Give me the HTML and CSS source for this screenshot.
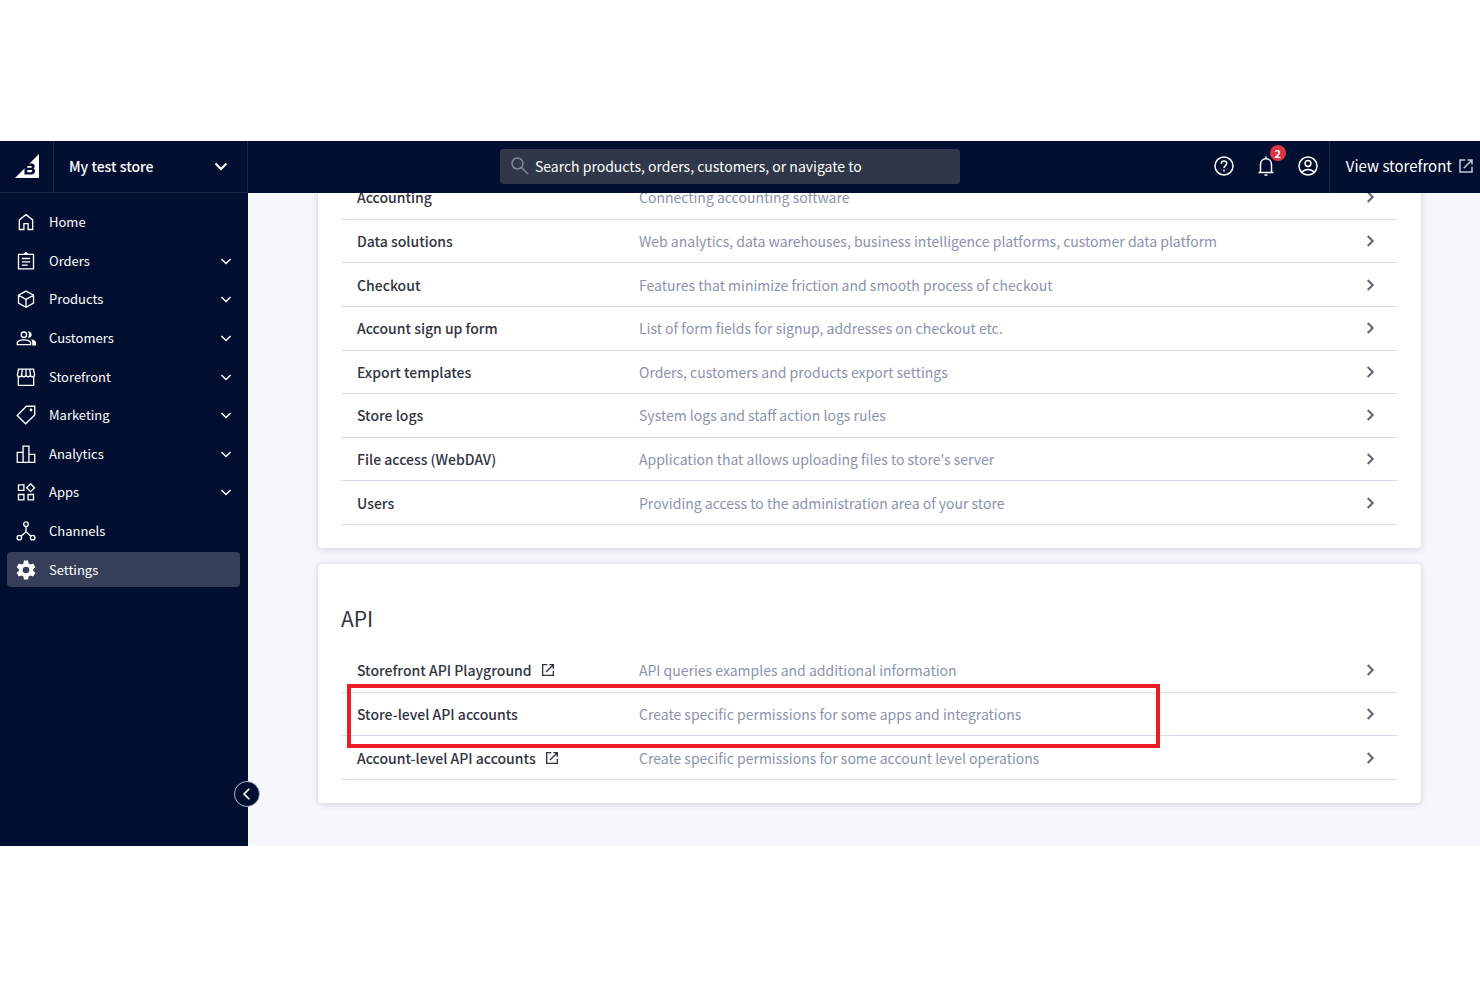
FILE: index.html
```html
<!DOCTYPE html>
<html lang="en">
<head>
  <meta charset="UTF-8" />
  <meta name="viewport" content="width=device-width, initial-scale=1.0"/>
  <title>Settings - My test store</title>
  <link rel="stylesheet" href="styles.css">
</head>
<body>

  <!-- Shared icons -->
  <svg class="sprite" aria-hidden="true">
    <symbol id="chevron-down" viewBox="0 0 24 24"><path d="M6.500 9.500l5.500 5.500 5.500-5.500"/></symbol>
    <symbol id="chevron-right" viewBox="0 0 24 24"><path d="M9.700 7l5 5-5 5"/></symbol>
    <symbol id="open-new" viewBox="0 0 24 24"><path d="M11 4H4v16h16v-7M14 4h6v6M20 4L9 15"/></symbol>
  </svg>

  <div class="app">
    <header class="topbar">
      <a class="logo" href="#" aria-label="BigCommerce home">
        <svg viewBox="0 0 24 24" width="24" height="24">
          <path fill="#fff" d="M24 0v24H0z"/>
          <path fill="#030f30" fill-rule="evenodd" d="M9.500 9.500h7c2 0 3.200 1.100 3.200 2.700 0 1.100-.5 1.900-1.300 2.300 1.100.4 1.700 1.300 1.700 2.600 0 2-1.400 3.400-3.600 3.400h-7zM12.300 11.900v1.900h3.500c.7 0 1.100-.4 1.100-1s-.4-.9-1.100-.9zM12.300 16v2.200h3.700c.8 0 1.200-.4 1.200-1.100S16.800 16 16 16z"/>
        </svg>
      </a>
      <button class="store-switch" type="button">
        My test store
        <svg class="icon" viewBox="0 0 24 24"><use href="#chevron-down"/></svg>
      </button>

      <div class="search-area">
        <label class="search">
          <svg viewBox="0 0 20 20" width="20" height="20"><circle cx="7.500" cy="7.500" r="5.500"/><path d="M11.500 11.500l6.500 6.500"/></svg>
          <input type="search" aria-label="Search" placeholder="Search products, orders, customers, or navigate to">
        </label>
      </div>

      <div class="actions">
        <button type="button" aria-label="Help">
          <svg viewBox="0 0 24 24"><circle cx="12" cy="12" r="9"/><path d="M9.300 9.800c0-1.700 1.200-2.700 2.700-2.700s2.700 1 2.700 2.500c0 2-2.700 2.200-2.700 4.400M12 15.600v1.900"/></svg>
        </button>
        <button type="button" aria-label="Notifications">
          <svg viewBox="0 0 24 24"><path d="M4.500 18.500h15M6.500 18.500v-8c0-3.300 2.200-5.700 5.500-5.700s5.500 2.400 5.500 5.700v8M12 4.800V2.500M10.500 21h3"/></svg>
          <span class="badge">2</span>
        </button>
        <button type="button" aria-label="Account">
          <svg viewBox="0 0 24 24"><circle cx="12" cy="12" r="9"/><circle cx="12" cy="9.500" r="2.900"/><path d="M5.700 18.300c1.600-1.900 3.800-2.900 6.300-2.900s4.700 1 6.300 2.900"/></svg>
        </button>
      </div>
      <a class="view-store" href="#">
        View storefront
        <svg viewBox="0 0 24 24" width="18" height="18"><use href="#open-new"/></svg>
      </a>
    </header>

    <div class="body">
      <nav class="sidebar">
        <ul class="menu">
          <li><a href="#">
            <svg viewBox="0 0 24 24"><path d="M4 21V9.500L12 3.200l8 6.300V21h-5.500v-7h-5v7z"/></svg>
            Home</a></li>
          <li><a href="#">
            <svg viewBox="0 0 24 24"><path d="M3 4h18v17.500H3zM7 9h10M7 13h10M7 17h7M9.500 4L12 2l2.500 2"/></svg>
            Orders
            <svg class="chevron" viewBox="0 0 24 24"><use href="#chevron-down"/></svg></a></li>
          <li><a href="#">
            <svg viewBox="0 0 24 24"><path d="M12 2.500l9 5v9.500l-9 5-9-5V7.500zM3 7.500l9 5 9-5M12 12.500V22"/></svg>
            Products
            <svg class="chevron" viewBox="0 0 24 24"><use href="#chevron-down"/></svg></a></li>
          <li><a href="#">
            <svg viewBox="0 0 24 24"><circle cx="9.500" cy="8" r="3.200"/><path d="M1.500 20v-2c0-2.300 3.500-3.800 8-3.800s8 1.500 8 3.800v2z"/><path class="solid" d="M14 4c3 0 4.800 1.700 4.800 4s-1.800 4-4.800 4c1-1 1.500-2.400 1.500-4S15 5 14 4zM18 13.500c3.500.6 6 2 6 4.500v3h-4.500v-3c0-1.700-.2-3-1.500-4.500z"/></svg>
            Customers
            <svg class="chevron" viewBox="0 0 24 24"><use href="#chevron-down"/></svg></a></li>
          <li><a href="#">
            <svg viewBox="0 0 24 24"><path d="M2.800 11.500V22h18.400V11.500M3 2.500h18l1.300 6.500c0 3.600-5.100 3.600-5.100 0 0 3.600-5.200 3.600-5.200 0 0 3.600-5.200 3.600-5.200 0 0 3.600-5.100 3.600-5.100 0zM7.500 2.500L6.800 9M12 2.500V9M16.500 2.500l.7 6.500"/></svg>
            Storefront
            <svg class="chevron" viewBox="0 0 24 24"><use href="#chevron-down"/></svg></a></li>
          <li><a href="#">
            <svg viewBox="0 0 24 24"><path d="M12.500 1.500H22.500V12L11.500 22.500 1.500 12.500z"/><circle class="solid" cx="18" cy="6" r="1.700"/></svg>
            Marketing
            <svg class="chevron" viewBox="0 0 24 24"><use href="#chevron-down"/></svg></a></li>
          <li><a href="#">
            <svg viewBox="0 0 24 24"><path d="M1.500 22V10H8.500v12zM8.500 22V2.500h7V22zM15.500 22v-9.500h7V22z"/></svg>
            Analytics
            <svg class="chevron" viewBox="0 0 24 24"><use href="#chevron-down"/></svg></a></li>
          <li><a href="#">
            <svg viewBox="0 0 24 24"><path d="M3 3.500h6.500V10H3zM3 15h6.500v6.500H3zM14.500 15H21v6.500h-6.500zM17.500 2.200l4.700 4.700-4.700 4.700-4.700-4.700z"/></svg>
            Apps
            <svg class="chevron" viewBox="0 0 24 24"><use href="#chevron-down"/></svg></a></li>
          <li><a href="#">
            <svg viewBox="0 0 24 24"><circle cx="12" cy="3.800" r="2.700"/><circle cx="4" cy="20" r="2.700"/><circle cx="20" cy="20" r="2.700"/><path d="M12 6.500v6.500l-6 5.200M12 13l6 5.200"/></svg>
            Channels</a></li>
          <li><a class="active" href="#">
            <svg viewBox="0 0 24 24"><path class="solid" fill-rule="evenodd" d="M9.500 .7h5l.6 3.400 2.100 1.200 3.400-1.200 2.600 4.700-2.700 2.200v2l2.700 2.200-2.600 4.700-3.400-1.200-2.100 1.200-.6 3.400h-5l-.6-3.400-2.100-1.200-3.400 1.200L.8 15.200 3.500 13v-2L.8 8.800l2.600-4.700 3.400 1.200 2.100-1.200zM12 8a4 4 0 100 8 4 4 0 000-8z"/></svg>
            Settings</a></li>
        </ul>
        <button class="collapse" type="button" aria-label="Collapse menu">
          <svg viewBox="0 0 24 24"><path d="M16 3l-9 9 9 9"/></svg>
        </button>
      </nav>

      <main class="content">
        <section class="card">
          <ul class="rows">
            <li><a href="#"><strong>Accounting</strong><span>Connecting accounting software</span><svg class="icon" viewBox="0 0 24 24"><use href="#chevron-right"/></svg></a></li>
            <li><a href="#"><strong>Data solutions</strong><span>Web analytics, data warehouses, business intelligence platforms, customer data platform</span><svg class="icon" viewBox="0 0 24 24"><use href="#chevron-right"/></svg></a></li>
            <li><a href="#"><strong>Checkout</strong><span>Features that minimize friction and smooth process of checkout</span><svg class="icon" viewBox="0 0 24 24"><use href="#chevron-right"/></svg></a></li>
            <li><a href="#"><strong>Account sign up form</strong><span>List of form fields for signup, addresses on checkout etc.</span><svg class="icon" viewBox="0 0 24 24"><use href="#chevron-right"/></svg></a></li>
            <li><a href="#"><strong>Export templates</strong><span>Orders, customers and products export settings</span><svg class="icon" viewBox="0 0 24 24"><use href="#chevron-right"/></svg></a></li>
            <li><a href="#"><strong>Store logs</strong><span>System logs and staff action logs rules</span><svg class="icon" viewBox="0 0 24 24"><use href="#chevron-right"/></svg></a></li>
            <li><a href="#"><strong>File access (WebDAV)</strong><span>Application that allows uploading files to store's server</span><svg class="icon" viewBox="0 0 24 24"><use href="#chevron-right"/></svg></a></li>
            <li><a href="#"><strong>Users</strong><span>Providing access to the administration area of your store</span><svg class="icon" viewBox="0 0 24 24"><use href="#chevron-right"/></svg></a></li>
          </ul>
        </section>

        <section class="card">
          <h2>API</h2>
          <ul class="rows rows-api">
            <li><a href="#"><strong>Storefront API Playground <svg class="open" viewBox="0 0 24 24"><use href="#open-new"/></svg></strong><span>API queries examples and additional information</span><svg class="icon" viewBox="0 0 24 24"><use href="#chevron-right"/></svg></a></li>
            <li class="marked"><a href="#"><strong>Store-level API accounts</strong><span>Create specific permissions for some apps and integrations</span><svg class="icon" viewBox="0 0 24 24"><use href="#chevron-right"/></svg></a></li>
            <li><a href="#"><strong>Account-level API accounts <svg class="open" viewBox="0 0 24 24"><use href="#open-new"/></svg></strong><span>Create specific permissions for some account level operations</span><svg class="icon" viewBox="0 0 24 24"><use href="#chevron-right"/></svg></a></li>
          </ul>
        </section>
      </main>
    </div>
  </div>

</body>
</html>
```
FILE: styles.css
```css
* {
  box-sizing: border-box;
}

body {
  margin: 0;
  min-height: 100vh;
  padding: 141px 0;
  display: flex;
  flex-direction: column;
  background: #fff;
  font-family: "Source Sans Pro", "Noto Sans CJK SC", sans-serif;
  font-size: 14px;
  line-height: 20px;
  color: #313440;
}

a {
  color: inherit;
  text-decoration: none;
}

button {
  padding: 0;
  border: none;
  background: none;
  font: inherit;
  color: inherit;
  cursor: pointer;
}

ul {
  margin: 0;
  padding: 0;
  list-style: none;
}

svg {
  flex: none;
  fill: none;
  stroke: currentColor;
  stroke-width: 2;
}

.sprite {
  position: absolute;
  width: 0;
  height: 0;
}

.icon {
  width: 24px;
  height: 24px;
}

.solid {
  fill: currentColor;
  stroke: none;
}

.app {
  flex: 1;
  display: flex;
  flex-direction: column;
}

/* Top bar */
.topbar {
  display: flex;
  height: 52px;
  background: #030f30;
  color: #fff;
}

.logo {
  width: 54px;
  padding: 0 0 1px 15px;
  display: flex;
  align-items: center;
  border-right: 1px solid #1d2744;
  border-bottom: 1px solid #1d2744;
}

.logo svg {
  stroke: none;
}

.store-switch {
  width: 194px;
  padding: 0 14px 2px 15px;
  display: flex;
  align-items: center;
  justify-content: space-between;
  font-weight: 500;
  border-right: 1px solid #1d2744;
  border-bottom: 1px solid #1d2744;
}

.search-area {
  flex: 1;
  padding-bottom: 2px;
  display: flex;
  align-items: center;
  justify-content: center;
}

.search {
  width: 460px;
  height: 35px;
  padding: 0 10px;
  display: flex;
  align-items: center;
  gap: 5px;
  border-radius: 4px;
  background: #2f3749;
}

.search svg {
  color: #8088a0;
  stroke-width: 1.5;
}

.search input {
  flex: 1;
  min-width: 0;
  padding: 0;
  border: none;
  outline: none;
  background: none;
  font: inherit;
  color: #fff;
}

.search input::placeholder {
  color: #fff;
  opacity: 1;
}

.actions {
  padding: 0 9px 2px 0;
  display: flex;
  align-items: center;
  gap: 18px;
  border-right: 1px solid #1d2744;
}

.actions button {
  position: relative;
  width: 24px;
  height: 24px;
}

.actions svg {
  display: block;
  stroke-width: 1.5;
}

.badge {
  position: absolute;
  top: -9px;
  right: -8px;
  width: 16px;
  height: 16px;
  border-radius: 50%;
  background: #db3643;
  font-size: 11px;
  font-weight: 700;
  line-height: 16px;
  text-align: center;
}

.view-store {
  padding: 0 5px 2px 16px;
  display: flex;
  align-items: center;
  gap: 5px;
  font-size: 15px;
}

.view-store svg {
  color: #c5c9d6;
}

/* Sidebar */
.body {
  flex: 1;
  display: flex;
  min-height: 0;
}

.sidebar {
  position: relative;
  width: 248px;
  padding: 10px 7px;
  background: #030f30;
  color: #fff;
  font-size: 13px;
}

.menu {
  height: 386px;
  display: grid;
  grid-auto-rows: 1fr;
  align-items: center;
}

.menu a {
  height: 35px;
  padding: 0 4px 0 9px;
  display: flex;
  align-items: center;
  gap: 13px;
  margin-right: 1px;
  border-radius: 4px;
}

.menu svg {
  width: 20px;
  height: 20px;
  stroke-width: 1.6;
}

.menu .chevron {
  margin-left: auto;
}

.menu .active {
  background: #353f5a;
}

.collapse {
  position: absolute;
  right: -12px;
  bottom: 39px;
  width: 26px;
  height: 26px;
  display: flex;
  align-items: center;
  justify-content: center;
  border: 1px solid #b5b9c6;
  border-radius: 50%;
  background: #030f30;
}

.collapse svg {
  width: 14px;
  height: 14px;
  stroke-width: 3;
}

/* Content, scrolled to its end */
.content {
  flex: 1;
  height: 653px;
  padding: 0 59px 43px 70px;
  display: flex;
  flex-direction: column;
  justify-content: flex-end;
  gap: 16px;
  overflow: hidden;
  background: #f6f7fc;
}

.card {
  flex: none;
  padding: 23px 24px 23px 23px;
  border-radius: 4px;
  background: #fff;
  box-shadow: 0 1px 6px rgba(49, 52, 64, 0.2);
}

.card h2 {
  margin: 16px 0;
  font-size: 21px;
  font-weight: 400;
  line-height: 30px;
}

.rows {
  height: 349px;
  display: grid;
  grid-auto-rows: 1fr;
}

.rows-api {
  height: 131px;
}

.rows li {
  border-bottom: 1px solid #d9dce9;
}

.rows a {
  height: 100%;
  padding: 0 15px 0 16px;
  display: grid;
  grid-template-columns: 282px 1fr 24px;
  align-items: center;
}

.rows strong {
  display: flex;
  align-items: center;
  gap: 8px;
  font-weight: 500;
}

.rows span {
  color: #8c93ad;
}

.rows .icon {
  color: #5e637a;
}

.open {
  width: 16px;
  height: 16px;
}

.marked {
  position: relative;
}

.marked::after {
  content: "";
  position: absolute;
  top: -9px;
  bottom: -13px;
  left: 6px;
  right: 237px;
  border: 4px solid #ed1c24;
  pointer-events: none;
}
```
